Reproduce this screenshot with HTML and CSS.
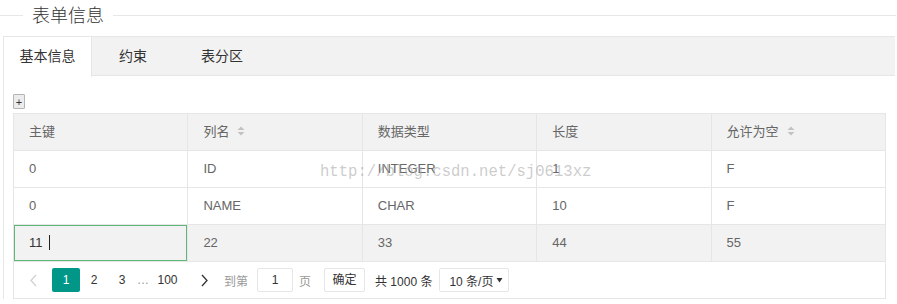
FILE: index.html
```html
<!DOCTYPE html>
<html lang="zh-CN">
<head>
<meta charset="utf-8">
<title>表单信息</title>
<link rel="stylesheet" href="styles.css">
</head>
<body>
<div class="legend-row">
  <div class="legend-line short"></div>
  <div class="legend-text">表单信息</div>
  <div class="legend-line long"></div>
</div>
<div class="card">
  <ul class="tab-title">
    <li class="tab first active">基本信息</li>
    <li class="tab">约束</li>
    <li class="tab">表分区</li>
  </ul>
  <div class="tab-content">
    <button class="add-btn" type="button">+</button>
    <div class="table-wrap">
      <table class="grid">
        <thead>
          <tr>
            <th>主键</th>
            <th>列名<svg class="sort" width="8" height="12" viewBox="0 0 8 12"><polygon points="0.5,5 4,1.5 7.5,5" fill="#c2c2c2"/><polygon points="0.5,7 4,10.5 7.5,7" fill="#c2c2c2"/></svg></th>
            <th>数据类型</th>
            <th>长度</th>
            <th>允许为空<svg class="sort" width="8" height="12" viewBox="0 0 8 12"><polygon points="0.5,5 4,1.5 7.5,5" fill="#c2c2c2"/><polygon points="0.5,7 4,10.5 7.5,7" fill="#c2c2c2"/></svg></th>
          </tr>
        </thead>
        <tbody>
          <tr>
            <td>0</td><td>ID</td><td>INTEGER</td><td>1</td><td>F</td>
          </tr>
          <tr>
            <td>0</td><td>NAME</td><td>CHAR</td><td>10</td><td>F</td>
          </tr>
          <tr class="hover">
            <td class="editing"><span class="edit-text">11</span><span class="caret"></span></td><td>22</td><td>33</td><td>44</td><td>55</td>
          </tr>
        </tbody>
      </table>
      <div class="watermark">http://blog.csdn.net/sj0613xz</div>
      <div class="pager">
        <span class="pg prev"><svg width="7" height="13" viewBox="0 0 7 13"><polyline points="6,1 1,6.5 6,12" fill="none" stroke="#d2d2d2" stroke-width="1.3"/></svg></span>
        <span class="pg curr">1</span>
        <span class="pg">2</span>
        <span class="pg">3</span>
        <span class="pg spr">…</span>
        <span class="pg last">100</span>
        <span class="pg next"><svg width="7" height="13" viewBox="0 0 7 13"><polyline points="1,1 6,6.5 1,12" fill="none" stroke="#333" stroke-width="1.3"/></svg></span>
        <span class="skip">到第</span>
        <span class="page-input">1</span>
        <span class="skip page-unit">页</span>
        <span class="confirm">确定</span>
        <span class="count">共 1000 条</span>
        <span class="limits">10 条/页<svg class="drop" width="7" height="6" viewBox="0 0 7 6"><polygon points="0.5,1 6.5,1 3.5,5.5" fill="#333"/></svg></span>
      </div>
    </div>
  </div>
</div>
</body>
</html>
```
FILE: styles.css
```css
* { box-sizing: border-box; }
html, body {
  margin: 0;
  padding: 0;
  background: #fff;
}
body {
  width: 897px;
  font-family: "Liberation Sans", "Noto Sans CJK SC", sans-serif;
  color: #666;
}

.legend-row {
  display: flex;
  align-items: center;
  height: 31px;
  width: 896px;
}
.legend-line {
  height: 1px;
  background: #e6e6e6;
}
.legend-line.short { width: 23px; }
.legend-line.long { flex: 1; }
.legend-text {
  padding: 0 9px;
  font-size: 18px;
  line-height: 26px;
  color: #333;
  font-weight: 300;
}

.card {
  margin-top: 5px;
  margin-left: 3px;
  width: 892px;
  border-left: 1px solid #e6e6e6;
  border-top: 1px solid #e6e6e6;
}
.tab-title {
  list-style: none;
  margin: 0;
  padding: 0;
  display: flex;
  height: 39px;
  background: #f2f2f2;
  border-bottom: 1px solid #e6e6e6;
}
.tab {
  height: 39px;
  line-height: 38px;
  padding: 0 27px;
  font-size: 14px;
  color: #333;
}
.tab.first {
  width: 88px;
  padding: 0;
  text-align: center;
}
.tab.active {
  background: #fff;
  border-right: 1px solid #e6e6e6;
  height: 40px;
}

.tab-content {
  padding: 18px 9px 0 9px;
}
.add-btn {
  display: block;
  width: 12px;
  height: 15px;
  padding: 0;
  margin: 0;
  border: 1px solid #b5b5b5;
  border-radius: 1px;
  background: #ececec;
  font-family: "Liberation Sans", sans-serif;
  font-size: 11px;
  line-height: 12px;
  color: #333;
}

.table-wrap {
  position: relative;
  margin-top: 4px;
  width: 873px;
}
.grid {
  width: 873px;
  table-layout: fixed;
  border-collapse: separate;
  border-spacing: 0;
  border-top: 1px solid #e6e6e6;
  border-left: 1px solid #e6e6e6;
  font-size: 13px;
}
.grid th, .grid td {
  padding: 0 15px;
  height: 37px;
  line-height: 36px;
  text-align: left;
  font-weight: normal;
  color: #666;
  border-right: 1px solid #e6e6e6;
  border-bottom: 1px solid #e6e6e6;
  white-space: nowrap;
}
.grid thead th { background: #f2f2f2; }
.grid tr.hover td { background: #f2f2f2; }
.sort {
  margin-left: 8px;
  vertical-align: -1px;
}
.grid td.editing {
  background: #fff;
  box-shadow: inset 0 0 0 1px #5fb878;
}
.edit-text { color: #333; }
.caret {
  display: inline-block;
  width: 1px;
  height: 15px;
  background: #222;
  margin-left: 6px;
  vertical-align: -3px;
}

.watermark {
  position: absolute;
  left: 307px;
  top: 50px;
  font-family: "Liberation Mono", monospace;
  font-size: 15.6px;
  line-height: 18px;
  color: rgba(170, 170, 170, 0.6);
  pointer-events: none;
  white-space: nowrap;
}

.pager {
  display: flex;
  align-items: center;
  height: 37px;
  padding: 0 0 0 5px;
  border-left: 1px solid #e6e6e6;
  border-right: 1px solid #e6e6e6;
  border-bottom: 1px solid #e6e6e6;
  font-size: 12px;
  color: #333;
}
.pg {
  display: flex;
  align-items: center;
  justify-content: center;
  width: 28px;
  height: 24px;
}
.pg.prev { margin-right: 5px; }
.pg.curr {
  background: #009688;
  color: #fff;
  border-radius: 2px;
}
.pg.spr { width: 14px; color: #999; }
.pg.last { width: 35px; }
.pg.next { margin-left: 5px; }
.skip {
  margin-left: 6px;
  color: #999;
}
.page-input {
  margin-left: 9px;
  width: 36px;
  height: 24px;
  line-height: 22px;
  border: 1px solid #e6e6e6;
  border-radius: 2px;
  text-align: center;
  background: #fff;
}
.page-unit { margin-left: 6px; }
.confirm {
  margin-left: 13px;
  width: 41px;
  height: 24px;
  line-height: 22px;
  border: 1px solid #e6e6e6;
  border-radius: 2px;
  text-align: center;
  background: #fff;
}
.count { margin-left: 10px; }
.limits {
  margin-left: 7px;
  width: 70px;
  height: 24px;
  display: flex;
  align-items: center;
  padding: 0 5px 0 9px;
  border: 1px solid #e6e6e6;
  border-radius: 2px;
  background: #fff;
}
.drop { margin-left: auto; }
```
